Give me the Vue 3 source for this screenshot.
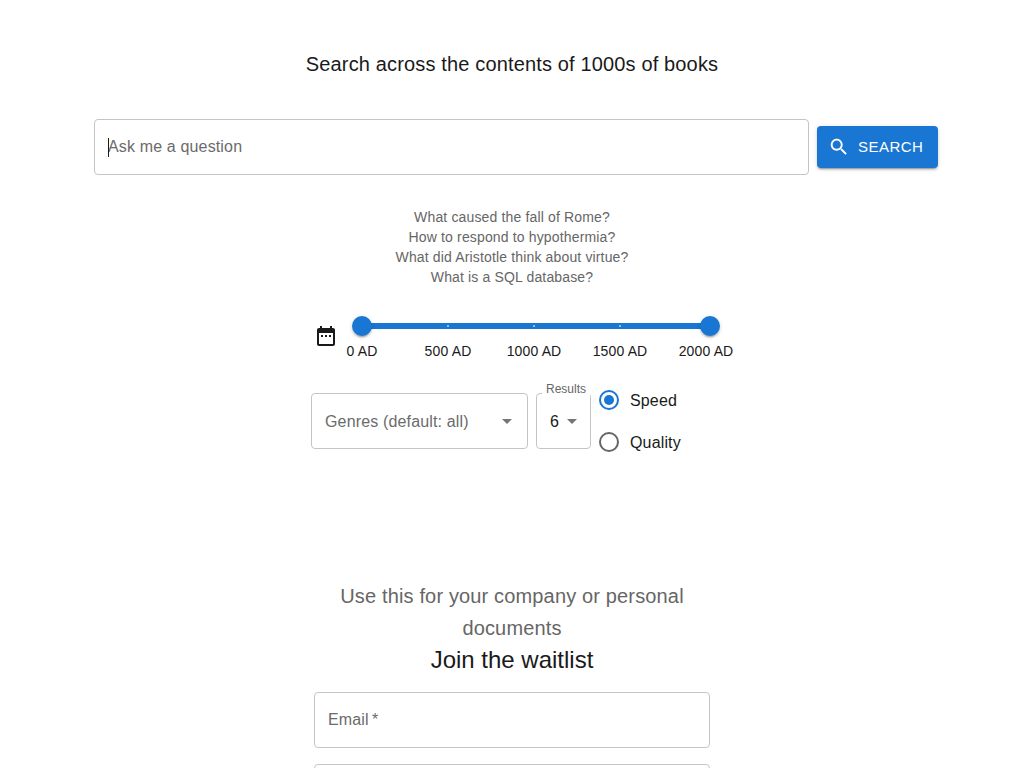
<script setup>
const examples = [
  'What caused the fall of Rome?',
  'How to respond to hypothermia?',
  'What did Aristotle think about virtue?',
  'What is a SQL database?'
]
const marks = ['0 AD', '500 AD', '1000 AD', '1500 AD', '2000 AD']
</script>

<template>
  <div class="page">
    <h1 class="title">Search across the contents of 1000s of books</h1>

    <div class="search-row">
      <div class="field search-field">
        <span class="caret"></span>
        <span class="placeholder">Ask me a question</span>
      </div>
      <button class="search-btn" type="button">
        <svg class="search-icon" viewBox="0 0 24 24" width="22" height="22" fill="currentColor">
          <path d="M15.5 14h-.79l-.28-.27C15.41 12.59 16 11.11 16 9.5 16 5.91 13.09 3 9.5 3S3 5.91 3 9.5 5.91 16 9.5 16c1.61 0 3.09-.59 4.23-1.57l.27.28v.79l5 4.99L20.49 19l-4.99-5zm-6 0C7.01 14 5 11.99 5 9.5S7.01 5 9.5 5 14 7.01 14 9.5 11.99 14 9.5 14z"/>
        </svg>
        <span class="search-label">SEARCH</span>
      </button>
    </div>

    <div class="examples">
      <div v-for="e in examples" :key="e" class="example">{{ e }}</div>
    </div>

    <div class="slider-row">
      <svg class="cal" viewBox="0 0 24 24" width="24" height="24" fill="#1a1a1a">
        <path d="M19 4h-1V2h-2v2H8V2H6v2H5c-1.11 0-2 .9-2 2v14c0 1.1.89 2 2 2h14c1.1 0 2-.9 2-2V6c0-1.1-.9-2-2-2zm0 16H5V9h14v11zM7 11h2v2H7zm4 0h2v2h-2zm4 0h2v2h-2z"/>
      </svg>
      <div class="slider">
        <div class="track">
          <span v-for="i in 5" :key="i" class="tick"></span>
        </div>
        <span class="thumb thumb-start"></span>
        <span class="thumb thumb-end"></span>
        <div class="marks">
          <span v-for="m in marks" :key="m" class="mark"><span class="mark-text">{{ m }}</span></span>
        </div>
      </div>
    </div>

    <div class="filters">
      <div class="field genres">
        <span class="placeholder">Genres (default: all)</span>
        <span class="arrow"></span>
      </div>
      <div class="field results">
        <span class="legend">Results</span>
        <span class="value">6</span>
        <span class="arrow"></span>
      </div>
      <div class="radios">
        <div class="radio">
          <span class="circle on"><span class="dot"></span></span>
          <span class="radio-label">Speed</span>
        </div>
        <div class="radio">
          <span class="circle"></span>
          <span class="radio-label">Quality</span>
        </div>
      </div>
    </div>

    <div class="waitlist">
      <p class="pitch">Use this for your company or personal documents</p>
      <h2 class="join">Join the waitlist</h2>
      <div class="field wait-field"><span class="placeholder">Email<span class="star">&thinsp;*</span></span></div>
      <div class="field wait-field"></div>
    </div>
  </div>
</template>

<style scoped>
.page {
  height: 768px;
  overflow: hidden;
  background: #fff;
  font-family: "Liberation Sans", Arial, sans-serif;
  color: #1a1a1a;
  display: flex;
  flex-direction: column;
  align-items: center;
}
.title {
  margin: 48px 0 0;
  font-size: 20px;
  font-weight: 400;
  line-height: 32px;
  letter-spacing: 0.15px;
}
.search-row {
  margin-top: 39px;
  margin-left: 8px;
  width: 844px;
  display: flex;
  align-items: center;
  gap: 8px;
}
.field {
  box-sizing: border-box;
  height: 56px;
  border: 1px solid #c4c4c4;
  border-radius: 4px;
  display: flex;
  align-items: center;
  position: relative;
  font-size: 16px;
  letter-spacing: 0.15px;
}
.search-field {
  flex: 1;
  padding-left: 13px;
}
.caret {
  position: absolute;
  left: 13px;
  top: 18px;
  width: 1px;
  height: 19px;
  background: #1a1a1a;
}
.placeholder {
  color: #6b6b6b;
}
.search-btn {
  box-sizing: border-box;
  width: 121px;
  height: 42px;
  border: 0;
  border-radius: 4px;
  background: #1976d2;
  color: #fff;
  font-family: inherit;
  font-size: 15px;
  letter-spacing: 0.46px;
  display: flex;
  align-items: center;
  padding: 0 0 0 11px;
  gap: 8px;
  box-shadow: 0 3px 1px -2px rgba(0,0,0,.2), 0 2px 2px 0 rgba(0,0,0,.14), 0 1px 5px 0 rgba(0,0,0,.12);
}
.search-label {
  margin-bottom: 2px;
}
.examples {
  margin-top: 32px;
  text-align: center;
  font-size: 14px;
  line-height: 20px;
  letter-spacing: 0.15px;
  color: #666;
}
.slider-row {
  margin-top: 18px;
  margin-left: 22px;
  width: 424px;
  display: flex;
  align-items: flex-start;
}
.cal {
  margin-top: 19px;
  margin-left: 3px;
  flex: none;
}
.slider {
  position: relative;
  width: 348px;
  height: 60px;
  margin-left: 24px;
}
.track {
  position: absolute;
  top: 18px;
  left: 0;
  right: 0;
  height: 6px;
  padding-right: 4px;
  box-sizing: border-box;
  background: #1976d2;
  display: flex;
  justify-content: space-between;
  align-items: center;
}
.tick {
  width: 2px;
  height: 2px;
  margin: 0 -1px;
  background: #b9d4ef;
  border-radius: 50%;
}
.thumb {
  position: absolute;
  top: 11px;
  width: 20px;
  height: 20px;
  border-radius: 50%;
  background: #1976d2;
  box-shadow: 0 3px 1px -2px rgba(0,0,0,.2), 0 2px 2px 0 rgba(0,0,0,.14), 0 1px 5px 0 rgba(0,0,0,.12);
}
.thumb-start { left: -10px; }
.thumb-end { right: -10px; }
.marks {
  position: absolute;
  top: 36px;
  left: 0;
  right: 4px;
  display: flex;
  justify-content: space-between;
}
.mark {
  width: 0;
  display: flex;
  justify-content: center;
  font-size: 14px;
  line-height: 20px;
  letter-spacing: 0.15px;
  color: #1a1a1a;
  white-space: nowrap;
}
.mark-text { flex: none; }
.filters {
  margin-top: 28px;
  display: flex;
  align-items: flex-start;
  width: 402px;
}
.genres {
  width: 217px;
  padding-left: 13px;
  padding-top: 2px;
}
.results {
  width: 55px;
  margin-left: 8px;
  padding-left: 13px;
  padding-top: 2px;
}
.value { color: #1a1a1a; }
.legend {
  position: absolute;
  top: -13px;
  left: 5px;
  padding: 0 4px;
  background: #fff;
  font-size: 12px;
  line-height: 16px;
  letter-spacing: 0;
  color: #666;
}
.arrow {
  position: absolute;
  right: 15px;
  top: 25px;
  width: 0;
  height: 0;
  border-left: 5px solid transparent;
  border-right: 5px solid transparent;
  border-top: 5px solid #757575;
}
.results .arrow { right: 13px; }
.radios {
  margin-left: 8px;
  margin-top: -3px;
  display: flex;
  flex-direction: column;
  gap: 22px;
  font-size: 16px;
  letter-spacing: 0.15px;
  color: #1a1a1a;
}
.radio {
  display: flex;
  align-items: center;
  gap: 11px;
  height: 20px;
}
.radio-label {
  margin-top: 2px;
}
.circle {
  box-sizing: border-box;
  width: 20px;
  height: 20px;
  border: 2px solid #666;
  border-radius: 50%;
  display: flex;
  align-items: center;
  justify-content: center;
}
.circle.on { border-color: #1976d2; }
.dot {
  width: 10px;
  height: 10px;
  border-radius: 50%;
  background: #1976d2;
}
.waitlist {
  margin-top: 128px;
  width: 396px;
  display: flex;
  flex-direction: column;
  align-items: center;
  text-align: center;
}
.pitch {
  margin: 0;
  font-size: 20px;
  line-height: 32px;
  letter-spacing: 0.15px;
  color: #666;
}
.join {
  margin: 0;
  font-size: 24px;
  font-weight: 400;
  line-height: 32px;
  color: #1a1a1a;
}
.wait-field {
  width: 100%;
  flex: none;
  margin-top: 16px;
  padding-left: 13px;
}
</style>
